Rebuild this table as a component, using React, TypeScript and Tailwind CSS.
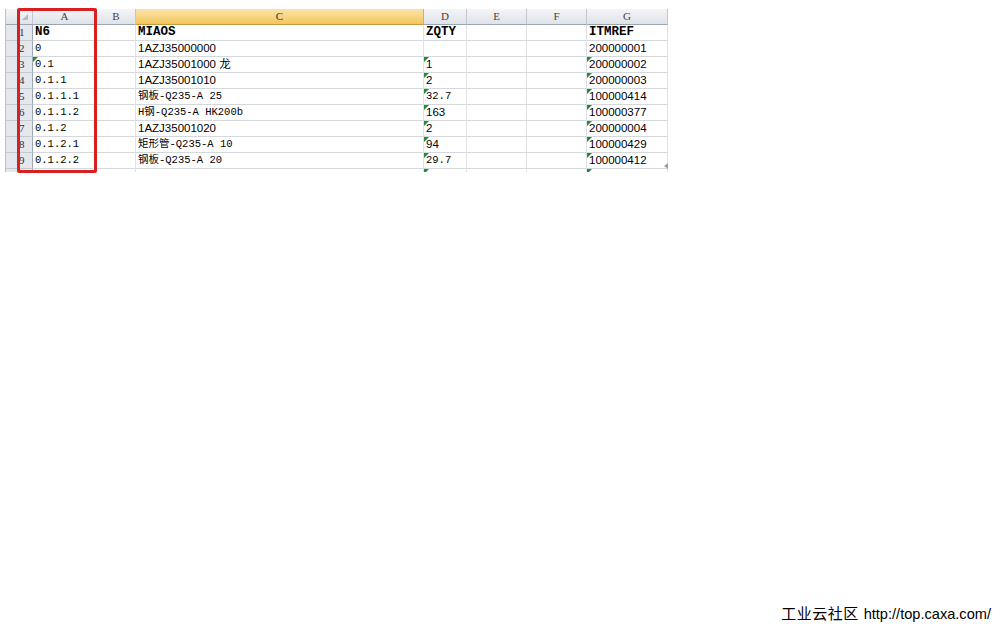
import React from "react";

type Row = { a: string; b?: string; c: string; d: string; g: string; ma?: boolean; md?: boolean; mg?: boolean; cs?: boolean; ds?: boolean };

const rows: Row[] = [
  { a: "N6", c: "MIAOS", d: "ZQTY", g: "ITMREF" },
  { a: "0", c: "1AZJ35000000", d: "", g: "200000001", cs: true },
  { a: "0.1", c: "1AZJ35001000 龙", d: "1", g: "200000002", ma: true, md: true, mg: true, cs: true, ds: true },
  { a: "0.1.1", c: "1AZJ35001010", d: "2", g: "200000003", md: true, mg: true, cs: true, ds: true },
  { a: "0.1.1.1", c: "钢板-Q235-A 25", d: "32.7", g: "100000414", md: true, mg: true },
  { a: "0.1.1.2", c: "H钢-Q235-A HK200b", d: "163", g: "100000377", md: true, mg: true, ds: true },
  { a: "0.1.2", c: "1AZJ35001020", d: "2", g: "200000004", md: true, mg: true, cs: true, ds: true },
  { a: "0.1.2.1", c: "矩形管-Q235-A 10", d: "94", g: "100000429", md: true, mg: true, ds: true },
  { a: "0.1.2.2", c: "钢板-Q235-A 20", d: "29.7", g: "100000412", md: true, mg: true },
];

const mono = "font-['Liberation_Mono','Noto_Sans_CJK_SC',monospace] text-[10.5px]";
const sans = "font-['Liberation_Sans','Noto_Sans_CJK_SC',sans-serif] text-[11.5px]";
const bold = "font-['Liberation_Mono',monospace] text-[12.5px] font-bold";

function Mark() {
  return (
    <span className="absolute left-0 top-0 w-0 h-0 border-t-[5px] border-t-[#1e8c3a] border-r-[5px] border-r-transparent" />
  );
}

function Cell({ children, cls = "", mark = false }: { children?: React.ReactNode; cls?: string; mark?: boolean }) {
  return (
    <div className={`relative h-[16px] border-r border-b border-r-[#dfe2e6] border-b-[#d5d9de] flex items-end pl-[2px] pb-[1px] leading-[13px] text-black whitespace-nowrap overflow-hidden ${cls}`}>
      {mark && <Mark />}
      {children}
    </div>
  );
}

function RowHead({ n }: { n?: React.ReactNode }) {
  return (
    <div className="h-[16px] border-r border-b border-r-[#9eaab8] border-b-[#c3c9d1] bg-[#e4e7ec] flex items-end justify-start pl-[13px] pb-[1px] leading-[13px] text-[11px] text-[#333] font-['Liberation_Serif',serif]">
      {n}
    </div>
  );
}

function ColHead({ l, sel = false }: { l: string; sel?: boolean }) {
  return (
    <div
      className={`h-[16px] border-r border-b flex items-center justify-center text-[11px] font-['Liberation_Serif',serif] ${
        sel
          ? "bg-linear-to-b from-[#fbe4a8] to-[#f3c65a] border-r-[#dcae4e] border-b-[#c99a3a] text-[#333]"
          : "bg-linear-to-b from-[#f4f5f7] to-[#dfe3e8] border-r-[#c3c8cf] border-b-[#9aa5b2] text-[#444]"
      }`}
    >
      {l}
    </div>
  );
}

export default function App() {
  return (
    <div className="w-[1008px] h-[630px] bg-white flex flex-col relative overflow-hidden">
      <div className="relative pt-[9px] pl-[5px]">
        <div className="h-[163px] overflow-hidden w-[663px] border-l border-l-[#b8c0ca]">
          <div className="grid grid-cols-[27px_64px_39px_288px_43px_60px_60px_81px]">
            <div className="relative h-[16px] border-r border-b border-r-[#c3c8cf] border-b-[#9aa5b2] bg-linear-to-b from-[#f4f5f7] to-[#dfe3e8]">
              <span className="absolute right-[4px] bottom-[4px] w-0 h-0 border-b-[6px] border-b-[#b7bcc4] border-l-[6px] border-l-transparent" />
            </div>
            {["A", "B", "C", "D", "E", "F", "G"].map((l) => (
              <ColHead key={l} l={l} sel={l === "C"} />
            ))}
            {rows.map((r, i) => (
              <React.Fragment key={i}>
                <RowHead n={i + 1} />
                <Cell cls={i === 0 ? bold : mono} mark={r.ma}>{r.a}</Cell>
                <Cell />
                <Cell cls={i === 0 ? bold : r.cs ? sans : mono}>{r.c}</Cell>
                <Cell cls={i === 0 ? bold : r.ds ? sans : mono} mark={r.md}>{r.d}</Cell>
                <Cell />
                <Cell />
                <Cell cls={i === 0 ? bold : sans} mark={r.mg}>{r.g}</Cell>
              </React.Fragment>
            ))}
            <RowHead />
            <Cell />
            <Cell />
            <Cell />
            <Cell mark />
            <Cell />
            <Cell />
            <Cell mark />
          </div>
        </div>
        <span className="absolute left-[664px] top-[163px] w-0 h-0 border-r-[4px] border-r-[#9aa0a8] border-y-[3px] border-y-transparent" />
        <div className="absolute left-[17px] top-[8px] w-[80px] h-[165px] border-[3px] border-[#d7201f] rounded-[2px]" />
      </div>
      <div className="mt-auto flex justify-end items-baseline pr-[17px] pb-[7px] text-black">
        <span className="font-['Noto_Sans_CJK_SC',sans-serif] text-[15px] leading-[18px] tracking-[0.5px]">工业云社区</span>
        <span className="font-['Liberation_Sans',sans-serif] text-[14.6px] leading-[18px] ml-[5px]">http://top.caxa.com/</span>
      </div>
    </div>
  );
}
